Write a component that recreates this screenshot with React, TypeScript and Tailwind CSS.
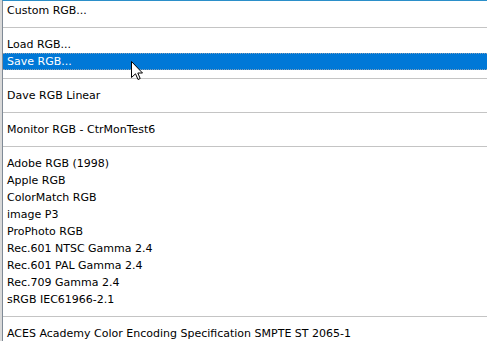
const sections: string[][] = [
  ["Custom RGB..."],
  ["Load RGB...", "Save RGB..."],
  ["Dave RGB Linear"],
  ["Monitor RGB - CtrMonTest6"],
  [
    "Adobe RGB (1998)",
    "Apple RGB",
    "ColorMatch RGB",
    "image P3",
    "ProPhoto RGB",
    "Rec.601 NTSC Gamma 2.4",
    "Rec.601 PAL Gamma 2.4",
    "Rec.709 Gamma 2.4",
    "sRGB IEC61966-2.1",
  ],
  ["ACES Academy Color Encoding Specification SMPTE ST 2065-1"],
];

function Cursor() {
  return (
    <svg className="absolute left-[131px] top-[61px]" width="13" height="20" viewBox="0 0 13 20">
      <path
        d="M0.5 0.5 L0.5 16.5 L4.5 12.8 L7 18.5 L9.2 17.5 L6.8 12 L11.5 12 Z"
        fill="#fff"
        stroke="#000"
        strokeWidth="1"
        strokeLinejoin="miter"
      />
    </svg>
  );
}

export default function App() {
  return (
    <div className="relative flex h-[341px] w-[487px] overflow-hidden bg-white font-['DejaVu_Sans',sans-serif] text-[11px] text-black">
      <div className="w-[2px] shrink-0 bg-[#d9d9d9]" />
      <div className="flex min-w-0 flex-1 flex-col border-l border-t border-l-[#7f8a96] border-t-[#2b8fc9] pt-[1px]">
        {sections.map((items, i) => (
          <div key={i} className="flex flex-col">
            {i > 0 ? (
              <div className="flex h-[17px] items-center">
                <div className="h-px w-full bg-[#c4c4c4]" />
              </div>
            ) : null}
            {items.map((label) =>
              label === "Save RGB..." ? (
                <div
                  key={label}
                  className="flex h-[17px] items-center border-y border-dotted border-[#8aa0b4] bg-[#0078d7] pl-[4px] leading-none text-white"
                >
                  {label}
                </div>
              ) : (
                <div key={label} className="flex h-[17px] items-center whitespace-nowrap pl-[4px] leading-none">
                  {label}
                </div>
              )
            )}
          </div>
        ))}
      </div>
      <Cursor />
    </div>
  );
}
